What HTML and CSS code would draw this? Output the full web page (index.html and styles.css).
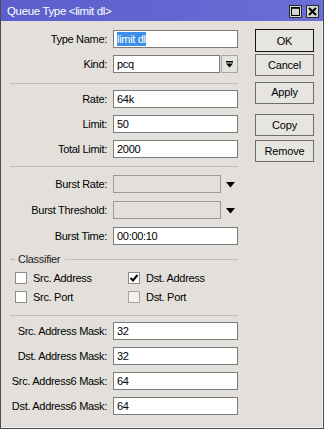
FILE: index.html
```html
<!DOCTYPE html>
<html lang="en">
<head>
    <meta charset="UTF-8">
    <title>Queue Type &lt;limit dl&gt;</title>
    <link rel="stylesheet" href="styles.css">
</head>
<body>
    <div class="window">
        <div class="titlebar">
            <span class="title">Queue Type &lt;limit dl&gt;</span>
            <div class="win-controls">
                <span class="win-btn">
                    <svg width="11" height="11" viewBox="0 0 11 11"><rect x="1.5" y="1.5" width="8" height="8" fill="none" stroke="#000" stroke-width="1"/><line x1="1.5" y1="2" x2="9.5" y2="2" stroke="#000" stroke-width="1.5"/></svg>
                </span>
                <span class="win-btn">
                    <svg width="11" height="11" viewBox="0 0 11 11"><path d="M2 2 L9 9 M9 2 L2 9" stroke="#000" stroke-width="2"/></svg>
                </span>
            </div>
        </div>

        <div class="content">
            <div class="form">
                <div class="row first">
                    <label>Type Name:</label>
                    <div class="field"><span class="selected">limit dl</span></div>
                </div>
                <div class="row">
                    <label>Kind:</label>
                    <div class="field short">pcq</div>
                    <span class="drop-btn">
                        <svg width="9" height="9" viewBox="0 0 9 9"><rect x="1" y="1" width="7" height="1.5" fill="#000"/><path d="M1 3.5 H8 L4.5 7.5 Z" fill="#000"/></svg>
                    </span>
                </div>

                <div class="sep sep-a"></div>

                <div class="row after-sep">
                    <label>Rate:</label>
                    <div class="field">64k</div>
                </div>
                <div class="row">
                    <label>Limit:</label>
                    <div class="field">50</div>
                </div>
                <div class="row">
                    <label>Total Limit:</label>
                    <div class="field">2000</div>
                </div>

                <div class="sep sep-b"></div>

                <div class="row burst">
                    <label>Burst Rate:</label>
                    <div class="field disabled"></div>
                    <svg class="tri" width="9" height="6" viewBox="0 0 9 6"><path d="M0 0 H9 L4.5 5.5 Z" fill="#000"/></svg>
                </div>
                <div class="row burst">
                    <label>Burst Threshold:</label>
                    <div class="field disabled"></div>
                    <svg class="tri" width="9" height="6" viewBox="0 0 9 6"><path d="M0 0 H9 L4.5 5.5 Z" fill="#000"/></svg>
                </div>
                <div class="row burst">
                    <label>Burst Time:</label>
                    <div class="field">00:00:10</div>
                </div>

                <div class="legend">
                    <span class="legend-dash"></span>
                    <span class="legend-text">Classifier</span>
                    <span class="legend-line"></span>
                </div>
                <div class="checks">
                    <div class="check"><span class="box"></span>Src. Address</div>
                    <div class="check"><span class="box">
                        <svg width="10" height="10" viewBox="0 0 10 10"><path d="M1.5 5 L4 7.5 L8.5 2" fill="none" stroke="#000" stroke-width="2"/></svg>
                    </span>Dst. Address</div>
                    <div class="check"><span class="box"></span>Src. Port</div>
                    <div class="check"><span class="box grey"></span>Dst. Port</div>
                </div>

                <div class="sep sep-c"></div>

                <div class="row after-sep">
                    <label>Src. Address Mask:</label>
                    <div class="field">32</div>
                </div>
                <div class="row">
                    <label>Dst. Address Mask:</label>
                    <div class="field">32</div>
                </div>
                <div class="row">
                    <label>Src. Address6 Mask:</label>
                    <div class="field">64</div>
                </div>
                <div class="row">
                    <label>Dst. Address6 Mask:</label>
                    <div class="field">64</div>
                </div>
            </div>

            <div class="buttons">
                <button class="btn default">OK</button>
                <button class="btn cancel">Cancel</button>
                <button class="btn apply">Apply</button>
                <button class="btn copy">Copy</button>
                <button class="btn remove">Remove</button>
            </div>
        </div>
    </div>
</body>
</html>
```

FILE: styles.css
```css
body {
    margin: 0;
    font-family: 'Liberation Sans', Tahoma, Arial, sans-serif;
    font-size: 11px;
    letter-spacing: -0.3px;
    color: #000;
}
.window {
    box-sizing: border-box;
    width: 324px;
    height: 429px;
    background-color: #e3e0dc;
    border: 1px solid #4a4a4a;
    border-top: none;
    box-shadow: inset -1px -1px 0 #f4f3f1;
    overflow: hidden;
}
.titlebar {
    height: 21px;
    margin: 0 -1px;
    background: linear-gradient(to right, #5b5ecb, #6a6ed6);
    display: flex;
    align-items: center;
    justify-content: space-between;
    padding: 0 5px 0 7px;
}
.title {
    color: #fff;
    font-size: 11.5px;
    letter-spacing: -0.35px;
}
.win-controls {
    display: flex;
    gap: 4px;
    margin-top: 1px;
}
.win-btn {
    box-sizing: border-box;
    width: 13px;
    height: 13px;
    background-color: #d8d6d2;
    border: 1px solid #2a2a2a;
    display: flex;
    align-items: center;
    justify-content: center;
}
.content {
    display: flex;
}
.form {
    width: 237px;
    display: flex;
    flex-direction: column;
}
.row {
    display: flex;
    align-items: center;
    height: 18px;
    margin-top: 7px;
}
.row.first {
    margin-top: 9px;
}
.row.after-sep {
    margin-top: 6px;
}
.row.burst {
    margin-top: 8px;
}
.row label {
    width: 106px;
    text-align: right;
    padding-right: 6px;
    box-sizing: content-box;
    white-space: nowrap;
}
.field {
    box-sizing: border-box;
    width: 125px;
    height: 18px;
    line-height: 16px;
    padding-left: 3px;
    background-color: #fff;
    border: 1px solid #7c7c7c;
    white-space: nowrap;
}
.field.short {
    width: 107px;
}
.field.disabled {
    width: 108px;
    background-color: #e3e0dc;
    border-color: #9c9a98;
}
.selected {
    background-color: #3d8ee8;
    color: #fff;
    padding: 1px 0;
}
.drop-btn {
    box-sizing: border-box;
    width: 17px;
    height: 18px;
    margin-left: 1px;
    border: 1px solid #a8a6a3;
    background-color: #e6e4e0;
    display: flex;
    align-items: center;
    justify-content: center;
}
.tri {
    margin-left: 5px;
    margin-top: 1px;
}
.sep {
    height: 0;
    margin-left: 9px;
    border-top: 1px solid #c2bfbb;
}
.sep-a {
    margin-top: 10px;
}
.sep-b {
    margin-top: 8px;
}
.sep-c {
    margin-top: 12px;
}
.legend {
    display: flex;
    align-items: center;
    height: 12px;
    margin-top: 8px;
    margin-left: 9px;
}
.legend-dash {
    width: 5px;
    border-top: 1px solid #b4b1ad;
}
.legend-text {
    padding: 0 5px 0 3px;
    color: #222;
}
.legend-line {
    flex-grow: 1;
    border-top: 1px solid #c2bfbb;
}
.checks {
    display: grid;
    grid-template-columns: 113px 1fr;
    row-gap: 6px;
    margin-top: 6px;
    margin-left: 14px;
}
.check {
    display: flex;
    align-items: center;
    height: 13px;
}
.box {
    box-sizing: border-box;
    width: 12px;
    height: 12px;
    margin-right: 6px;
    background-color: #fff;
    border: 1px solid #8e8c8a;
    display: flex;
    align-items: center;
    justify-content: center;
}
.box.grey {
    background-color: #f2f1ef;
    border-color: #a6a4a1;
}
.buttons {
    display: flex;
    flex-direction: column;
    margin-left: 17px;
    width: 59px;
}
.btn {
    box-sizing: border-box;
    width: 59px;
    height: 22px;
    padding: 0;
    font-family: inherit;
    font-size: 11px;
    letter-spacing: -0.2px;
    color: #000;
    background-color: #e7e5e1;
    border: 1px solid #6e6c6a;
    border-radius: 0;
}
.btn.default {
    height: 23px;
    margin-top: 8px;
    border-color: #141414;
}
.btn.cancel {
    margin-top: 2px;
}
.btn.apply {
    margin-top: 6px;
    padding-bottom: 3px;
}
.btn.copy {
    margin-top: 10px;
}
.btn.remove {
    margin-top: 4px;
}
```
